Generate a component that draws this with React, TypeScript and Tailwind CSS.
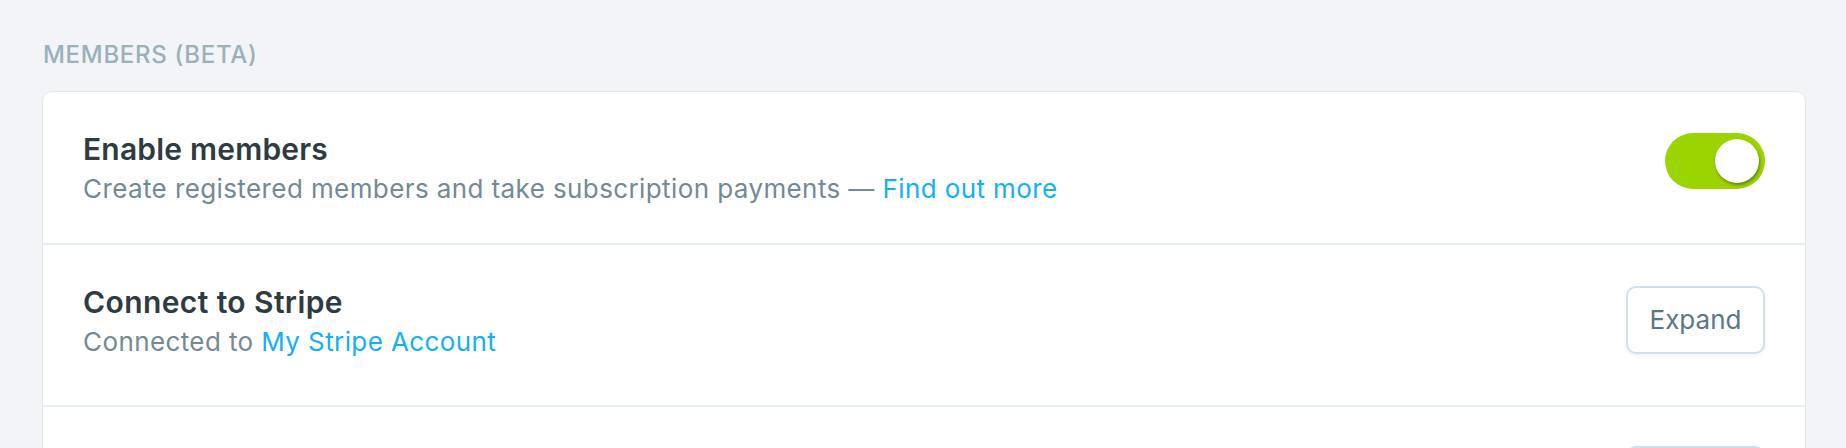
import React from "react";

const font = { fontFamily: "Inter, 'Noto Sans', sans-serif" };

function ExpandButton({ label }: { label?: string }) {
  return (
    <button className="w-[139px] h-[68px] rounded-[10px] border-2 border-[#d3e0e7] bg-white shadow-[0_2px_4px_rgba(0,0,0,0.05)] text-[26px] text-[#5b7783] leading-none flex items-center justify-center">
      {label}
    </button>
  );
}

export default function App() {
  return (
    <div className="h-[448px] overflow-hidden bg-[#f2f4f7] pl-[42px] pr-[40px] pt-[39px]" style={font}>
      <h2 className="pl-[1px] text-[24px] leading-[32px] font-medium uppercase tracking-[0.7px] text-[#9cb0ba] mb-[20px]">
        Members (beta)
      </h2>
      <div className="bg-white border border-[#e3e8ec] rounded-[10px]">
        <div className="h-[153px] px-[40px] pt-[37px] flex items-start justify-between border-b-2 border-[#e5eef4]">
          <div>
            <div className="text-[30px] leading-[40px] font-semibold tracking-[0.2px] text-[#2f3b42]">Enable members</div>
            <div className="text-[26px] leading-[36px] mt-[2px] tracking-[0.4px] text-[#738a94]">
              Create registered members and take subscription payments —{" "}
              <span className="text-[#14b0f3]">Find out more</span>
            </div>
          </div>
          <div className="mt-[4px] w-[100px] h-[56px] rounded-full bg-[#9bd400] flex items-center justify-end pr-[6px]">
            <div className="w-[44px] h-[44px] rounded-full bg-white shadow-[1px_2px_3px_rgba(40,60,0,0.5)]" />
          </div>
        </div>
        <div className="h-[162px] px-[40px] pt-[37px] flex items-start justify-between border-b-2 border-[#e5eef4]">
          <div>
            <div className="text-[30px] leading-[40px] font-semibold tracking-[0.4px] text-[#2f3b42]">Connect to Stripe</div>
            <div className="text-[26px] leading-[36px] mt-[2px] tracking-[0.4px] text-[#738a94]">
              Connected to <span className="text-[#14b0f3]">My Stripe Account</span>
            </div>
          </div>
          <div className="mt-[4px]">
            <ExpandButton label="Expand" />
          </div>
        </div>
        <div className="h-[162px] px-[40px] pt-[39px] flex items-start justify-end">
          <ExpandButton />
        </div>
      </div>
    </div>
  );
}
